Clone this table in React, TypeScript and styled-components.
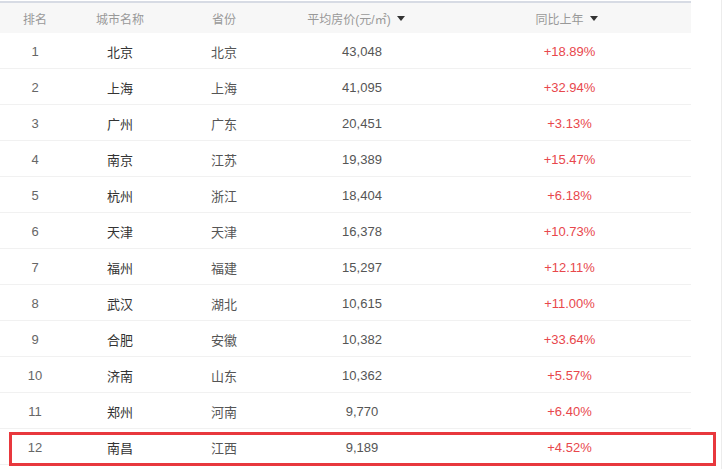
import styled, { createGlobalStyle } from 'styled-components';

const GlobalStyle = createGlobalStyle`
  html, body {
    margin: 0;
    padding: 0;
    background: #fff;
  }
  body {
    font-family: "Liberation Sans", "Noto Sans CJK SC", sans-serif;
  }
`;

const Panel = styled.div`
  position: relative;
  width: 722px;
  height: 469px;
  border-right: 1px solid #ececec;
  box-sizing: border-box;
  overflow: hidden;
`;

const Table = styled.div`
  width: 691px;
  margin-top: 1px;
`;

const cols = '70px 100px 108px 168px 1fr';

const HeadRow = styled.div`
  display: grid;
  grid-template-columns: ${cols};
  height: 30px;
  align-items: center;
  background: #f7f7f7;
  border-top: 2px solid #d7dbe4;
`;

const HeadCell = styled.div<{ $shift?: number }>`
  display: flex;
  align-items: center;
  justify-content: center;
  gap: 6px;
  font-size: 12px;
  color: #999;
  margin-left: ${({ $shift }) => $shift ?? 0}px;
`;

const Caret = styled.span`
  display: inline-block;
  width: 0;
  height: 0;
  border-left: 4px solid transparent;
  border-right: 4px solid transparent;
  border-top: 5px solid #333;
  margin-top: 1px;
`;

const Row = styled.div`
  display: grid;
  grid-template-columns: ${cols};
  height: 35px;
  align-items: center;
  border-bottom: 1px solid #f1f1f1;
`;

const Cell = styled.div<{ $tone?: 'rank' | 'city' | 'prov' | 'num' | 'up' }>`
  text-align: center;
  font-size: 13px;
  padding-top: 2px;
  color: ${({ $tone }) =>
    $tone === 'city'
      ? '#333'
      : $tone === 'up'
      ? '#e8474c'
      : $tone === 'rank'
      ? '#666'
      : '#555'};
  padding-left: ${({ $tone }) => ($tone === 'num' ? '0' : $tone === 'up' ? '2px' : '0')};
`;

const Highlight = styled.div`
  position: absolute;
  left: 9px;
  top: 432px;
  width: 707px;
  height: 34px;
  border: 3px solid #e8383d;
  box-sizing: border-box;
  pointer-events: none;
`;

const data = [
  ['1', '北京', '北京', '43,048', '+18.89%'],
  ['2', '上海', '上海', '41,095', '+32.94%'],
  ['3', '广州', '广东', '20,451', '+3.13%'],
  ['4', '南京', '江苏', '19,389', '+15.47%'],
  ['5', '杭州', '浙江', '18,404', '+6.18%'],
  ['6', '天津', '天津', '16,378', '+10.73%'],
  ['7', '福州', '福建', '15,297', '+12.11%'],
  ['8', '武汉', '湖北', '10,615', '+11.00%'],
  ['9', '合肥', '安徽', '10,382', '+33.64%'],
  ['10', '济南', '山东', '10,362', '+5.57%'],
  ['11', '郑州', '河南', '9,770', '+6.40%'],
  ['12', '南昌', '江西', '9,189', '+4.52%'],
];

export default function App() {
  return (
    <>
      <GlobalStyle />
      <Panel>
        <Table>
          <HeadRow>
            <HeadCell>排名</HeadCell>
            <HeadCell>城市名称</HeadCell>
            <HeadCell>省份</HeadCell>
            <HeadCell $shift={-12}>
              平均房价(元/㎡)
              <Caret />
            </HeadCell>
            <HeadCell $shift={-4}>
              同比上年
              <Caret />
            </HeadCell>
          </HeadRow>
          {data.map((r) => (
            <Row key={r[0]}>
              <Cell $tone="rank">{r[0]}</Cell>
              <Cell $tone="city">{r[1]}</Cell>
              <Cell $tone="prov">{r[2]}</Cell>
              <Cell $tone="num">{r[3]}</Cell>
              <Cell $tone="up">{r[4]}</Cell>
            </Row>
          ))}
        </Table>
        <Highlight />
      </Panel>
    </>
  );
}
